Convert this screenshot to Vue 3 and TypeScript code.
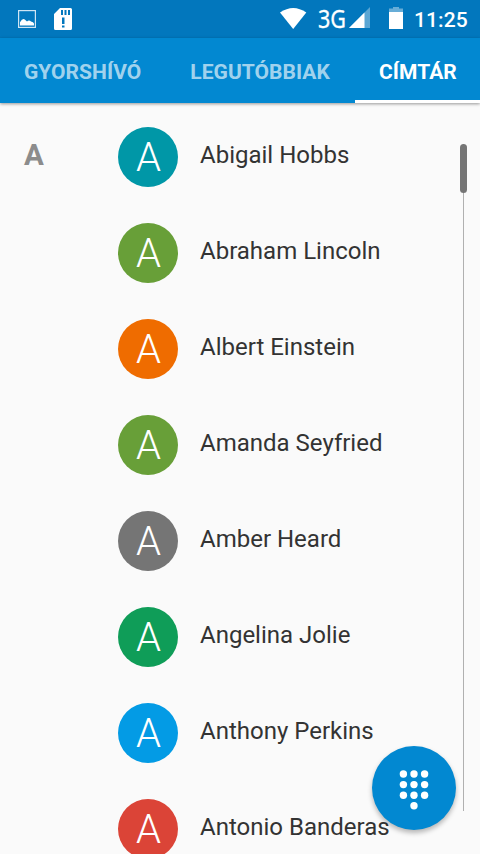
<script setup lang="ts">
interface Contact {
  name: string
  color: string
}

const tabs: { label: string; active: boolean }[] = [
  { label: 'GYORSHÍVÓ', active: false },
  { label: 'LEGUTÓBBIAK', active: false },
  { label: 'CÍMTÁR', active: true },
]

const contacts: Contact[] = [
  { name: 'Abigail Hobbs', color: '#0097a7' },
  { name: 'Abraham Lincoln', color: '#689f38' },
  { name: 'Albert Einstein', color: '#ef6c00' },
  { name: 'Amanda Seyfried', color: '#689f38' },
  { name: 'Amber Heard', color: '#757575' },
  { name: 'Angelina Jolie', color: '#0f9d58' },
  { name: 'Anthony Perkins', color: '#039be5' },
  { name: 'Antonio Banderas', color: '#db4437' },
]

const keys: [number, number][] = [
  [5.4, 5], [16, 5], [26.6, 5],
  [5.4, 15.6], [16, 15.6], [26.6, 15.6],
  [5.4, 26.2], [16, 26.2], [26.6, 26.2],
  [16, 36.8],
]
</script>

<template>
  <div class="screen">
    <header class="status">
      <svg class="picture" width="18" height="18" viewBox="0 0 18 18">
        <rect x="0.6" y="0.6" width="16.8" height="16.8" fill="none" stroke="#cfe5f4" stroke-width="1.2" />
        <path d="M2 15.500V12.200Q4.500 8 6.800 9.500L9 11.500Q11 9.500 13 11.500Q15.500 12 16 13.500v2z" fill="#fff" />
      </svg>
      <svg class="sdcard" width="18" height="22" viewBox="0 0 18 22">
        <path fill="#fff" fill-rule="evenodd" d="M6 0H16.500Q18 0 18 1.500V20.500Q18 22 16.500 22H1.500Q0 22 0 20.500V6zM7 2v5h2V2zM10.500 2v5h2V2zM14 2v5h2V2zM8 9.500v6.500h2.500V9.500zM8 17.500v2h2.500v-2z" />
      </svg>
      <span class="spacer"></span>
      <svg class="wifi" width="27" height="21" viewBox="0 0 27 21">
        <path d="M0 4.600Q13.300-4.600 26.300 4.600L13.200 21z" fill="#fff" />
      </svg>
      <svg class="network" width="40" height="38" viewBox="0 0 40 38">
        <text class="network-label" x="0" y="28" textLength="28" lengthAdjust="spacingAndGlyphs">3G</text>
      </svg>
      <svg class="signal" width="21" height="21" viewBox="0 0 21 21">
        <path d="M0 21L21 0V21z" fill="#fff" opacity="0.35" />
        <path d="M0 21L15.500 5.500V21z" fill="#fff" />
      </svg>
      <svg class="battery" width="14" height="22" viewBox="0 0 14 22">
        <path d="M0 1.500H4V0H10V1.500H14V5H0z" fill="#fff" opacity="0.4" />
        <path d="M0 5H14V22H0z" fill="#fff" />
      </svg>
      <span class="clock">11:25</span>
    </header>

    <nav class="tabs">
      <button v-for="tab in tabs" :key="tab.label" class="tab" :class="{ active: tab.active }">
        {{ tab.label }}
      </button>
    </nav>

    <main class="list">
      <div class="section">A</div>
      <ul class="contacts">
        <li v-for="contact in contacts" :key="contact.name" class="contact">
          <span class="avatar" :style="{ backgroundColor: contact.color }">{{ contact.name.charAt(0) }}</span>
          <span class="name">{{ contact.name }}</span>
        </li>
      </ul>
    </main>

    <div class="scroll"><div class="thumb"></div></div>

    <button class="fab">
      <svg width="32" height="42" viewBox="0 0 32 42">
        <circle v-for="([x, y], i) in keys" :key="i" :cx="x" :cy="y" r="3.7" fill="#fff" />
      </svg>
    </button>
  </div>
</template>

<style>
body {
  background: #fafafa;
}
</style>

<style scoped>
.screen {
  position: relative;
  display: flex;
  flex-direction: column;
  width: 480px;
  height: 854px;
  overflow: hidden;
  background: #fafafa;
  font-family: Roboto, sans-serif;
}

.status {
  flex: none;
  display: flex;
  align-items: flex-start;
  height: 38px;
  padding: 0 12px 0 18px;
  box-sizing: border-box;
  background: #0277bd;
}

.status svg { flex: none; }
.picture { margin-top: 10px; }
.sdcard { margin: 8px 0 0 18px; }
.spacer { flex: 1; }
.wifi { margin: 8px 11px 0 0; }
.network { margin: 0 -9px 0 0; }
.signal { margin: 7px 19px 0 0; }
.battery { margin: 7px 11px 0 0; }

.network-label {
  font-family: "Noto Sans", sans-serif;
  font-size: 26px;
  fill: #fff;
  stroke: #fff;
  stroke-width: 0.3px;
}

.clock {
  width: 54px;
  color: #fff;
  font-size: 21px;
  font-weight: 500;
  line-height: 40px;
  letter-spacing: 0.1px;
}

.tabs {
  position: relative;
  z-index: 1;
  flex: none;
  display: flex;
  gap: 1px;
  height: 65px;
  background: #0288d1;
  box-shadow: 0 1px 3px rgba(0, 0, 0, 0.4);
}

.tab {
  flex: none;
  padding: 6px 24px 0;
  border: 0;
  border-bottom: 3px solid transparent;
  background: none;
  color: rgba(255, 255, 255, 0.65);
  font: 700 21px/1 Roboto, sans-serif;
  letter-spacing: 0.04px;
  white-space: nowrap;
}

.tab.active {
  flex: 1 0 0;
  padding-right: 23px;
  color: #fff;
  border-bottom-color: #fff;
}

.list {
  flex: 1;
  display: flex;
  min-height: 0;
  padding-top: 6px;
}

.section {
  width: 94px;
  padding-left: 24px;
  box-sizing: content-box;
  color: #8c8c8c;
  font-size: 29.5px;
  font-weight: 700;
  line-height: 92px;
}

.contacts {
  margin: 0;
  padding: 0;
  list-style: none;
}

.contact {
  display: flex;
  align-items: center;
  gap: 22px;
  height: 96px;
}

.avatar {
  flex: none;
  width: 60px;
  height: 60px;
  border-radius: 50%;
  color: #fff;
  font-size: 40px;
  font-weight: 300;
  line-height: 62px;
  text-align: center;
  text-indent: 1px;
}

.name {
  padding-bottom: 4px;
  color: #333;
  font-size: 24px;
  white-space: nowrap;
}

.scroll {
  position: absolute;
  top: 144px;
  right: 13px;
  display: flex;
  justify-content: center;
  width: 7px;
  height: 667px;
  background: linear-gradient(#b0b0b0, #b0b0b0) center / 1px 100% no-repeat;
}

.thumb {
  width: 7px;
  height: 49px;
  border-radius: 3.5px;
  background: #757575;
}

.fab {
  position: absolute;
  right: 24px;
  bottom: 24px;
  display: flex;
  align-items: center;
  justify-content: center;
  width: 84px;
  height: 84px;
  padding: 4px 0 0;
  border: 0;
  border-radius: 50%;
  background: #0288d1;
  box-shadow: 0 3px 5px rgba(0, 0, 0, 0.28);
}
</style>
